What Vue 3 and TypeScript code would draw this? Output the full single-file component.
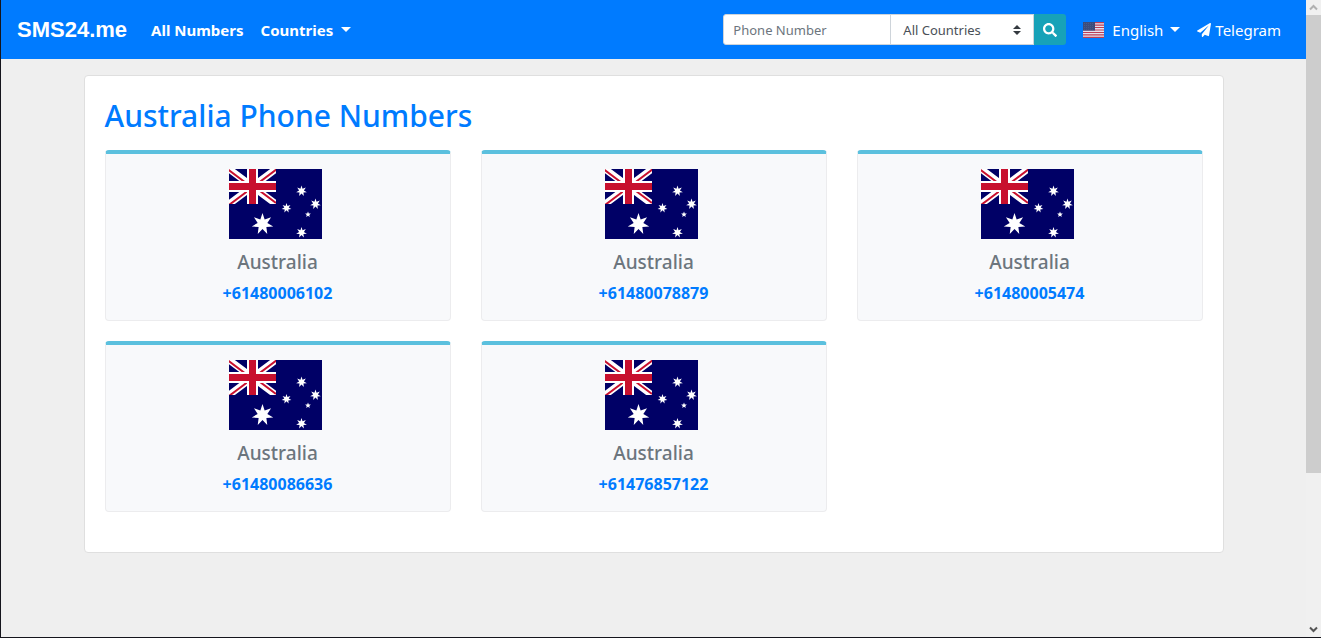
<script setup lang="ts">
import { ref } from 'vue'

interface PhoneEntry {
  country: string
  number: string
}

interface Star {
  x: number
  y: number
  r: number
  points: number
}

const phone = ref('')
const country = ref('all')

const entries: PhoneEntry[] = [
  { country: 'Australia', number: '+61480006102' },
  { country: 'Australia', number: '+61480078879' },
  { country: 'Australia', number: '+61480005474' },
  { country: 'Australia', number: '+61480086636' },
  { country: 'Australia', number: '+61476857122' },
]

const stars: Star[] = [
  { x: 33.5, y: 55, r: 11, points: 7 },
  { x: 72.5, y: 22, r: 5.5, points: 7 },
  { x: 57.5, y: 39, r: 5, points: 7 },
  { x: 86.5, y: 35, r: 5.5, points: 7 },
  { x: 79, y: 45.5, r: 3, points: 5 },
  { x: 72.5, y: 63.5, r: 5.5, points: 7 },
]

function starPoints(star: Star): string {
  const out: string[] = []
  for (let i = 0; i < star.points * 2; i++) {
    const radius = i % 2 === 0 ? star.r : star.r * 0.45
    const angle = (Math.PI * i) / star.points - Math.PI / 2
    out.push(`${(star.x + radius * Math.cos(angle)).toFixed(2)},${(star.y + radius * Math.sin(angle)).toFixed(2)}`)
  }
  return out.join(' ')
}
</script>

<template>
  <div class="window">
    <div class="page">
      <header class="navbar">
        <a class="brand" href="#">SMS24.me</a>
        <nav class="links">
          <a href="#">All Numbers</a>
          <button type="button" class="menu">Countries<span class="caret"></span></button>
        </nav>
        <form class="search" @submit.prevent>
          <input v-model="phone" type="text" placeholder="Phone Number" aria-label="Phone Number" />
          <select v-model="country" aria-label="Country">
            <option value="all">All Countries</option>
            <option value="au">Australia</option>
          </select>
          <button type="submit" aria-label="Search">
            <svg viewBox="0 0 512 512" width="14" height="14" aria-hidden="true">
              <path fill="#fff" d="M505 442.7L405.3 343c-4.5-4.5-10.6-7-17-7H372c27.6-35.3 44-79.7 44-128C416 93.1 322.9 0 208 0S0 93.1 0 208s93.1 208 208 208c48.3 0 92.7-16.4 128-44v16.3c0 6.4 2.5 12.5 7 17l99.7 99.7c9.4 9.4 24.6 9.4 33.9 0l28.3-28.3c9.4-9.4 9.4-24.6.1-34zM208 336c-70.7 0-128-57.2-128-128 0-70.7 57.2-128 128-128 70.7 0 128 57.2 128 128 0 70.7-57.2 128-128 128z" />
            </svg>
          </button>
        </form>
        <button type="button" class="language">
          <svg viewBox="0 0 21 16" width="21" height="16" aria-hidden="true">
            <rect width="21" height="16" fill="#e4e2ee" />
            <path d="M0 .6h21M0 3.1h21M0 5.5h21M0 8h21M0 10.5h21M0 12.9h21M0 15.4h21" stroke="#bd3d55" stroke-width="1.23" />
            <rect width="12" height="8.6" fill="#3c4d7c" />
            <path d="M1 1.5h10M1 3.5h10M1 5.5h10M1 7.3h10" stroke="#52658f" stroke-width=".6" stroke-dasharray="1 1" />
          </svg>
          <span>English</span><span class="caret"></span>
        </button>
        <a class="telegram" href="#">
          <svg viewBox="0 0 512 512" width="14" height="14" aria-hidden="true">
            <path fill="#fff" d="M476 3.2L12.5 270.6c-18.1 10.4-15.8 35.6 2.2 43.2L121 358.4l287.3-253.2c5.5-4.9 13.3 2.6 8.6 8.3L176 407v80.5c0 23.6 28.5 32.9 42.5 15.8L282 426l124.6 52.2c14.2 6 30.4-2.9 33-18.2l72-432C515 7.8 493.3-6.8 476 3.2z" />
          </svg>
          <span>Telegram</span>
        </a>
      </header>

      <main class="panel">
        <h1>Australia Phone Numbers</h1>
        <div class="grid">
          <article v-for="entry in entries" :key="entry.number" class="card">
            <svg class="flag" viewBox="0 0 93 70" width="93" height="70" role="img" aria-label="Flag of Australia">
              <rect width="93" height="70" fill="#006" />
              <svg width="47" height="35" viewBox="0 0 47 35">
                <path d="M0 0l47 35M47 0L0 35" stroke="#fff" stroke-width="7" />
                <path d="M-1 0.5L23 18.5M47 34l-24-18M0 36l24-18M48 0L24 18" stroke="#c8102e" stroke-width="2" />
                <path d="M23.5 0v35M0 17.500h47" stroke="#fff" stroke-width="11" />
                <path d="M23.5 0v35M0 17.500h47" stroke="#c8102e" stroke-width="7" />
              </svg>
              <polygon v-for="(star, i) in stars" :key="i" :points="starPoints(star)" fill="#fff" />
            </svg>
            <h2>{{ entry.country }}</h2>
            <a href="#">{{ entry.number }}</a>
          </article>
        </div>
      </main>
    </div>

    <div class="scrollbar" aria-hidden="true">
      <svg viewBox="0 0 15 15" width="15" height="15"><path d="M4 9.500l3.500-3.500 3.500 3.500" fill="none" stroke="#b0b0b0" stroke-width="2" /></svg>
      <div class="track"><div class="thumb"></div></div>
      <svg viewBox="0 0 15 15" width="15" height="15"><path d="M4 5.500l3.500 3.500 3.500-3.500" fill="none" stroke="#555" stroke-width="2" /></svg>
    </div>
  </div>
</template>

<style>
body {
  margin: 0;
  background: #efefef;
}
</style>

<style scoped>
* {
  box-sizing: border-box;
}

.window {
  display: flex;
  min-height: 100vh;
  border-left: 1px solid #15151c;
  border-bottom: 1px solid #15151c;
  background: #efefef;
  color: #212529;
  font-family: "Segoe UI", "Noto Sans", sans-serif;
  font-size: 15px;
  line-height: 24px;
}

.page {
  flex: 1;
  min-width: 0;
}

a {
  text-decoration: none;
}

button,
input,
select {
  margin: 0;
  font: inherit;
}

.navbar {
  display: flex;
  align-items: center;
  min-height: 59px;
  padding: 0 25px 0 16px;
  background: #007bff;
  color: #fff;
}

.navbar a,
.menu,
.language {
  color: #fff;
  white-space: nowrap;
}

.menu,
.language {
  display: flex;
  align-items: center;
  padding: 0;
  border: 0;
  background: none;
}

.brand {
  font-family: "Liberation Sans", Arial, sans-serif;
  font-size: 22px;
  font-weight: 700;
}

.links {
  display: flex;
  gap: 17px;
  margin-left: 24px;
  margin-right: auto;
  font-weight: 700;
}

.caret {
  width: 0;
  height: 0;
  margin-left: 8px;
  border: 5px solid transparent;
  border-top-color: #fff;
  border-bottom: 0;
}

.search {
  display: flex;
  height: 31px;
}

.search input {
  width: 168px;
  padding: 0 9px;
  border: 1px solid #ced4da;
  border-radius: 3px 0 0 3px;
  background: #fff;
  font-size: 13px;
}

.search input::placeholder {
  color: #6c757d;
  opacity: 1;
}

.search select {
  width: 144px;
  margin-left: -1px;
  padding: 0 28px 0 12px;
  border: 1px solid #ced4da;
  border-radius: 0;
  appearance: none;
  background: #fff url("data:image/svg+xml,%3Csvg xmlns='http://www.w3.org/2000/svg' viewBox='0 0 4 5'%3E%3Cpath fill='%23343a40' d='M2 0L0 2h4zm0 5L0 3h4z'/%3E%3C/svg%3E") no-repeat right 12px center / 8px 10px;
  color: #495057;
  font-size: 13px;
}

.search button {
  display: flex;
  align-items: center;
  justify-content: center;
  width: 32px;
  padding: 0;
  border: 0;
  border-radius: 0 3px 3px 0;
  background: #17a2b8;
}

.language {
  margin-left: 17px;
}

.language svg {
  margin-right: 8px;
}

.language .caret {
  margin-left: 7px;
}

.telegram {
  display: flex;
  align-items: center;
  gap: 4px;
  margin-left: 17px;
}

.panel {
  width: calc(100% - 32px);
  max-width: 1140px;
  margin: 16px auto;
  padding: 20px 20px 40px;
  border: 1px solid #dfdfdf;
  border-radius: 4px;
  background: #fff;
}

h1 {
  margin: 0 0 14px;
  color: #007bff;
  font-size: 30px;
  font-weight: 500;
  line-height: 40px;
}

.grid {
  display: grid;
  grid-template-columns: repeat(3, 1fr);
  gap: 20px 30px;
}

.card {
  display: flex;
  flex-direction: column;
  align-items: center;
  padding: 15px 20px;
  border: 1px solid #ececee;
  border-top: 4px solid #5bc0de;
  border-radius: 4px;
  background: #f8f9fb;
}

.flag {
  display: block;
  margin-right: 4px;
}

h2 {
  margin: 12px 0 8px;
  color: #6c757d;
  font-size: 19px;
  font-weight: 500;
  line-height: 22px;
}

.card a {
  color: #007bff;
  font-size: 16px;
  font-weight: 700;
}

.scrollbar {
  display: flex;
  flex: none;
  flex-direction: column;
  width: 15px;
  background: #f0f0f0;
}

.scrollbar svg {
  display: block;
}

.track {
  flex: 1;
  display: flex;
  flex-direction: column;
}

.thumb {
  flex: 0 0 75.5%;
  background: #cdcdcd;
}
</style>
